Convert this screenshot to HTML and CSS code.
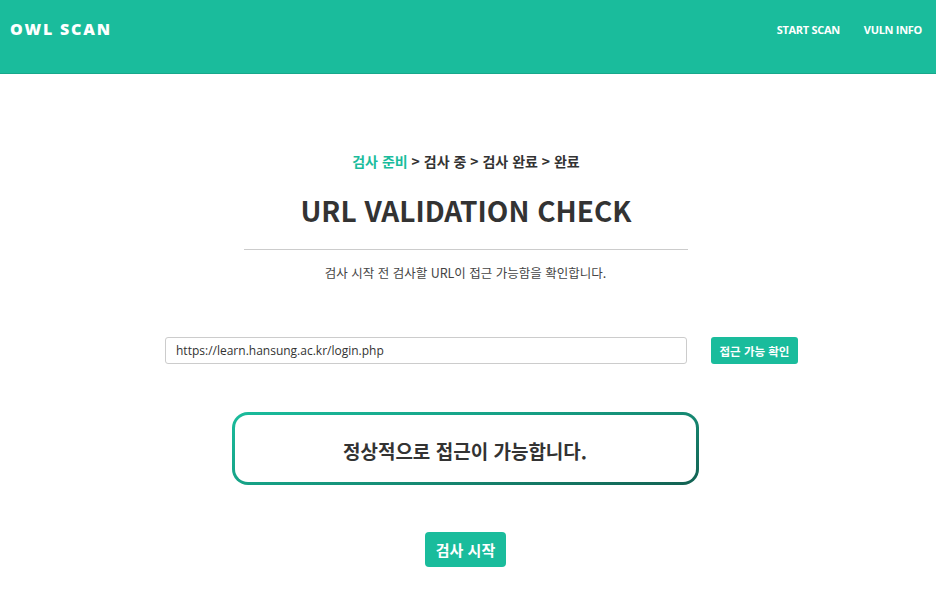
FILE: index.html
```html
<!DOCTYPE html>
<html lang="ko">
<head>
<meta charset="utf-8">
<title>OWL SCAN</title>
<link rel="stylesheet" href="styles.css">
</head>
<body>
<header class="topbar">
  <div class="brand">OWL SCAN</div>
  <nav class="nav">
    <a class="nav-link" href="#">START SCAN</a>
    <a class="nav-link" href="#">VULN INFO</a>
  </nav>
</header>
<main class="content">
  <div class="steps"><span class="step-active">검사 준비</span> &gt; 검사 중 &gt; 검사 완료 &gt; 완료</div>
  <h1 class="title">URL VALIDATION CHECK</h1>
  <hr class="divider">
  <p class="desc">검사 시작 전 검사할 URL이 접근 가능함을 확인합니다.</p>
  <div class="url-row">
    <input class="url-input" type="text" value="https://learn.hansung.ac.kr/login.php">
    <button class="check-btn">접근 가능 확인</button>
  </div>
  <div class="result">정상적으로 접근이 가능합니다.</div>
  <button class="start-btn">검사 시작</button>
</main>
</body>
</html>
```
FILE: styles.css
```css
* { box-sizing: border-box; }
html, body { margin: 0; padding: 0; background: #fff; }
body {
  font-family: "Noto Sans CJK KR", "Noto Sans", sans-serif;
  color: #333;
  width: 936px;
  height: 591px;
  overflow: hidden;
}
.topbar {
  height: 74px;
  background: #1abc9c;
  border-bottom: 1px solid #17a88b;
  display: flex;
  align-items: flex-start;
  justify-content: space-between;
  padding: 19px 14px 0 10px;
}
.brand {
  font-family: "Open Sans", "Lato", sans-serif;
  font-weight: 800;
  font-size: 16px;
  letter-spacing: 1.8px;
  line-height: 20px;
  color: #fff;
}
.nav { display: flex; gap: 24px; margin-top: 1px; }
.nav-link {
  font-family: "Open Sans", sans-serif;
  font-weight: 700;
  font-size: 11px;
  line-height: 20px;
  color: #fff;
  text-decoration: none;
  letter-spacing: -0.3px;
}
.content {
  display: flex;
  flex-direction: column;
  align-items: center;
  padding-top: 75px;
}
.steps {
  font-size: 14px;
  font-weight: 700;
  color: #333;
  line-height: 24px;
  margin-left: -4px;
}
.step-active { color: #1abc9c; }
.title {
  margin: 20px 0 0 -4px;
  font-size: 28px;
  font-weight: 700;
  line-height: 34px;
  color: #333;
  letter-spacing: 0;
}
.divider {
  width: 444px;
  margin: 22px 0 0 -4px;
  border: 0;
  border-top: 1px solid #ccc;
}
.desc {
  margin: 12px 0 0 -5px;
  font-size: 12.5px;
  color: #444;
  line-height: 22px;
}
.url-row {
  display: flex;
  gap: 24px;
  margin: 53px 0 0 27px;
}
.url-input {
  width: 522px;
  height: 27px;
  border: 1px solid #ccc;
  border-radius: 3px;
  padding: 0 10px;
  font-family: "Open Sans", "Noto Sans", sans-serif;
  font-size: 12px;
  color: #333;
  outline: none;
}
.check-btn {
  width: 87px;
  height: 27px;
  border: 0;
  border-radius: 3px;
  background: #1abc9c;
  color: #fff;
  font-family: "Noto Sans CJK KR", sans-serif;
  font-weight: 700;
  font-size: 11.5px;
  padding: 0;
}
.result {
  margin: 48px 0 0 -6px;
  width: 467px;
  height: 73px;
  border: 3px solid transparent;
  border-radius: 16px;
  background:
    linear-gradient(#fff, #fff) padding-box,
    linear-gradient(165deg, #1abc9c 0%, #16a085 40%, #136152 100%) border-box;
  display: flex;
  align-items: center;
  justify-content: center;
  font-size: 19px;
  font-weight: 700;
  color: #333;
  padding-top: 3px;
}
.start-btn {
  margin: 47px 0 0 -5px;
  width: 81px;
  height: 35px;
  border: 0;
  border-radius: 4px;
  background: #1abc9c;
  color: #fff;
  font-family: "Noto Sans CJK KR", sans-serif;
  font-weight: 700;
  font-size: 15px;
  padding: 0;
}
```
